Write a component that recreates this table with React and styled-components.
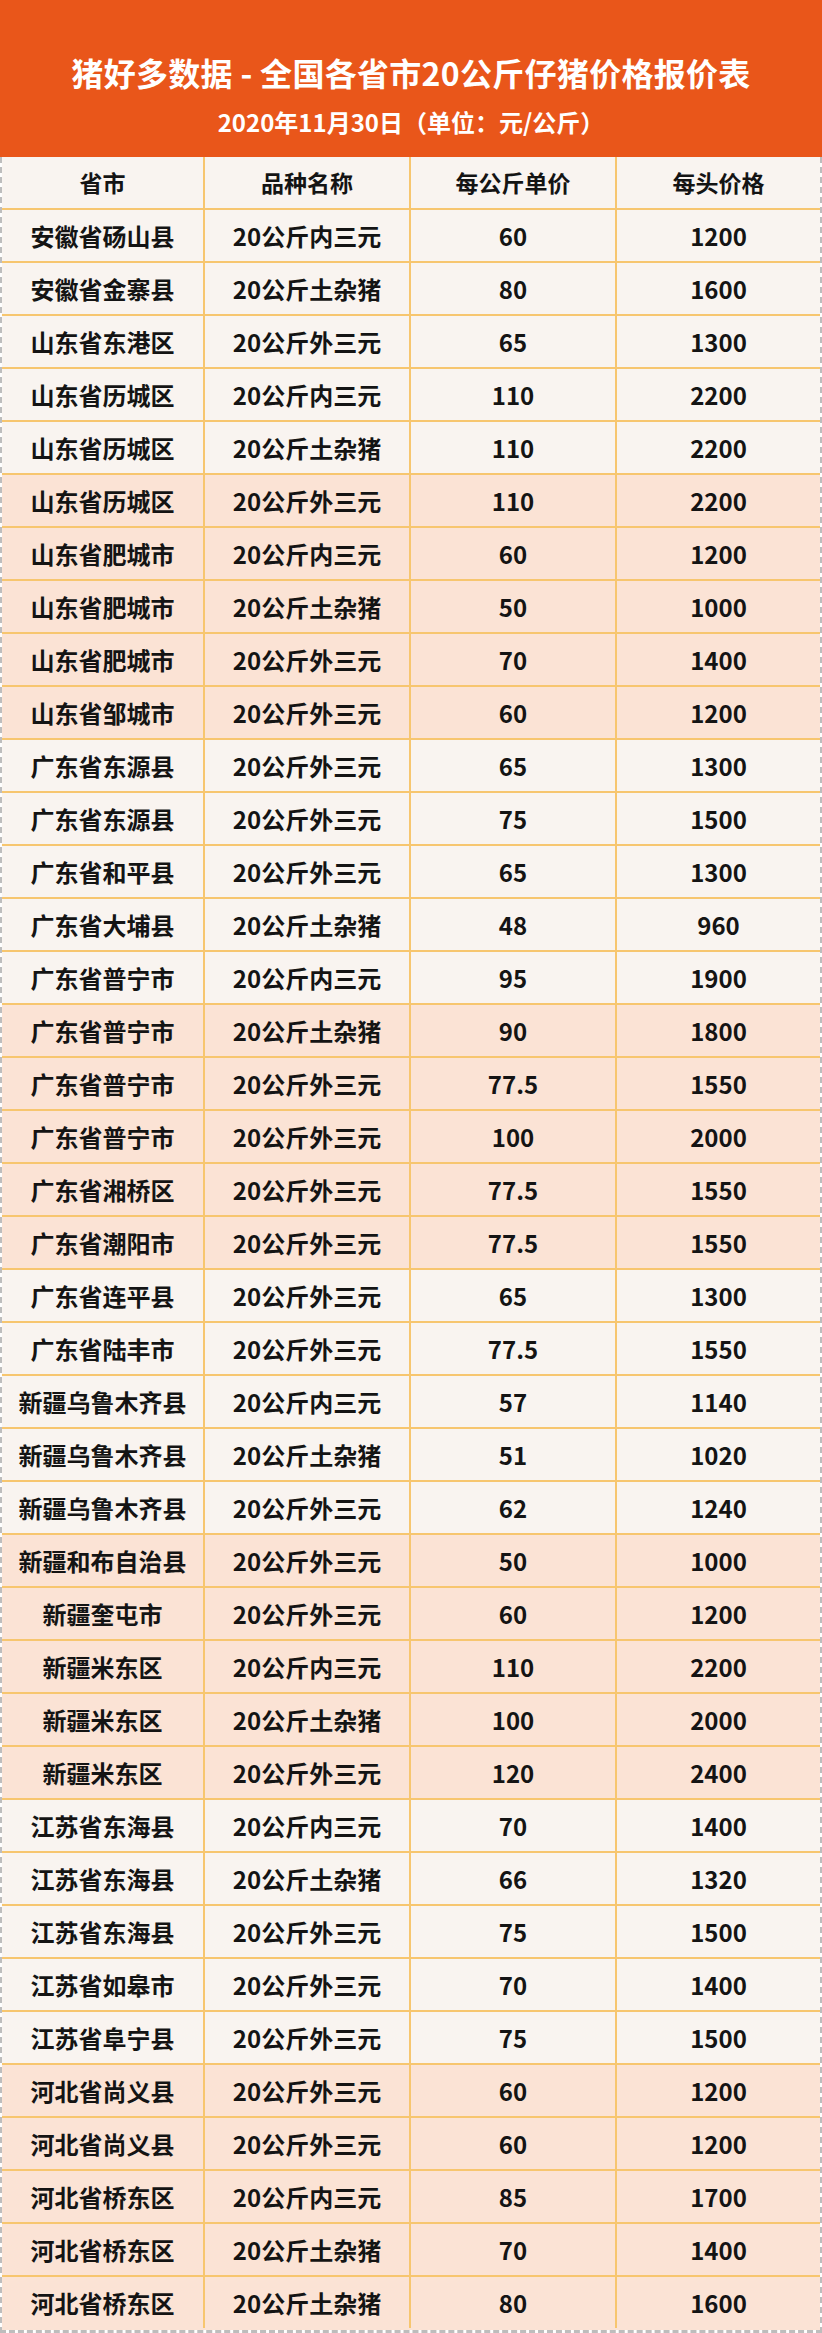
import React from 'react';
import styled, { createGlobalStyle } from 'styled-components';

const GlobalStyle = createGlobalStyle`
  html, body {
    margin: 0;
    padding: 0;
    background: #ffffff;
  }
  body {
    font-family: "Noto Sans CJK SC", "Noto Sans", sans-serif;
  }
`;

const colors = {
  banner: '#e9561a',
  light: '#f9f4f0',
  peach: '#fbe3d5',
  line: '#f7c66f',
  dash: '#bdbdbd',
  text: '#141414',
};

const rows = [
  ['安徽省砀山县', '20公斤内三元', '60', '1200'],
  ['安徽省金寨县', '20公斤土杂猪', '80', '1600'],
  ['山东省东港区', '20公斤外三元', '65', '1300'],
  ['山东省历城区', '20公斤内三元', '110', '2200'],
  ['山东省历城区', '20公斤土杂猪', '110', '2200'],
  ['山东省历城区', '20公斤外三元', '110', '2200'],
  ['山东省肥城市', '20公斤内三元', '60', '1200'],
  ['山东省肥城市', '20公斤土杂猪', '50', '1000'],
  ['山东省肥城市', '20公斤外三元', '70', '1400'],
  ['山东省邹城市', '20公斤外三元', '60', '1200'],
  ['广东省东源县', '20公斤外三元', '65', '1300'],
  ['广东省东源县', '20公斤外三元', '75', '1500'],
  ['广东省和平县', '20公斤外三元', '65', '1300'],
  ['广东省大埔县', '20公斤土杂猪', '48', '960'],
  ['广东省普宁市', '20公斤内三元', '95', '1900'],
  ['广东省普宁市', '20公斤土杂猪', '90', '1800'],
  ['广东省普宁市', '20公斤外三元', '77.5', '1550'],
  ['广东省普宁市', '20公斤外三元', '100', '2000'],
  ['广东省湘桥区', '20公斤外三元', '77.5', '1550'],
  ['广东省潮阳市', '20公斤外三元', '77.5', '1550'],
  ['广东省连平县', '20公斤外三元', '65', '1300'],
  ['广东省陆丰市', '20公斤外三元', '77.5', '1550'],
  ['新疆乌鲁木齐县', '20公斤内三元', '57', '1140'],
  ['新疆乌鲁木齐县', '20公斤土杂猪', '51', '1020'],
  ['新疆乌鲁木齐县', '20公斤外三元', '62', '1240'],
  ['新疆和布自治县', '20公斤外三元', '50', '1000'],
  ['新疆奎屯市', '20公斤外三元', '60', '1200'],
  ['新疆米东区', '20公斤内三元', '110', '2200'],
  ['新疆米东区', '20公斤土杂猪', '100', '2000'],
  ['新疆米东区', '20公斤外三元', '120', '2400'],
  ['江苏省东海县', '20公斤内三元', '70', '1400'],
  ['江苏省东海县', '20公斤土杂猪', '66', '1320'],
  ['江苏省东海县', '20公斤外三元', '75', '1500'],
  ['江苏省如皋市', '20公斤外三元', '70', '1400'],
  ['江苏省阜宁县', '20公斤外三元', '75', '1500'],
  ['河北省尚义县', '20公斤外三元', '60', '1200'],
  ['河北省尚义县', '20公斤外三元', '60', '1200'],
  ['河北省桥东区', '20公斤内三元', '85', '1700'],
  ['河北省桥东区', '20公斤土杂猪', '70', '1400'],
  ['河北省桥东区', '20公斤土杂猪', '80', '1600'],
];

const headings = ['省市', '品种名称', '每公斤单价', '每头价格'];

const StyledSheet = styled.div`
  width: 822px;
  box-sizing: border-box;
`;

const StyledBanner = styled.header`
  height: 157px;
  background: ${colors.banner};
  color: #ffffff;
  display: flex;
  flex-direction: column;
  align-items: center;
  justify-content: flex-start;
  padding-top: 52px;
  box-sizing: border-box;
`;

const StyledTitle = styled.h1`
  margin: 0;
  font-size: 32px;
  line-height: 40px;
  font-weight: 700;
  letter-spacing: 0.3px;
`;

const StyledSubtitle = styled.p`
  margin: 15px 0 0;
  font-size: 24px;
  line-height: 30px;
  font-weight: 700;
`;

const StyledTable = styled.div`
  border-left: 2px dashed ${colors.dash};
  border-right: 2px dashed ${colors.dash};
  border-bottom: 3px dashed ${colors.dash};
`;

const StyledRow = styled.div`
  display: grid;
  grid-template-columns: 203px 206px 206px 1fr;
  height: 53px;
  box-sizing: border-box;
  background: ${({ tone }) => (tone === 'peach' ? colors.peach : colors.light)};
  border-bottom: 2px solid ${({ last }) => (last ? 'transparent' : colors.line)};
`;

const StyledCell = styled.div`
  display: flex;
  align-items: center;
  justify-content: center;
  box-sizing: border-box;
  border-right: 2px solid ${colors.line};
  color: ${colors.text};
  font-size: ${({ head }) => (head ? '23px' : '24px')};
  font-weight: 700;
  line-height: 1;
  white-space: nowrap;

  &:last-child {
    border-right: none;
  }
`;

const App = () => (
  <StyledSheet>
    <GlobalStyle />
    <StyledBanner>
      <StyledTitle>猪好多数据 - 全国各省市20公斤仔猪价格报价表</StyledTitle>
      <StyledSubtitle>2020年11月30日（单位：元/公斤）</StyledSubtitle>
    </StyledBanner>
    <StyledTable>
      <StyledRow tone="light">
        {headings.map((h) => (
          <StyledCell head key={h}>
            {h}
          </StyledCell>
        ))}
      </StyledRow>
      {rows.map((row, i) => (
        <StyledRow
          key={i}
          tone={Math.floor(i / 5) % 2 === 1 ? 'peach' : 'light'}
          last={i === rows.length - 1}
        >
          {row.map((value, j) => (
            <StyledCell key={j}>{value}</StyledCell>
          ))}
        </StyledRow>
      ))}
    </StyledTable>
  </StyledSheet>
);

export default App;
